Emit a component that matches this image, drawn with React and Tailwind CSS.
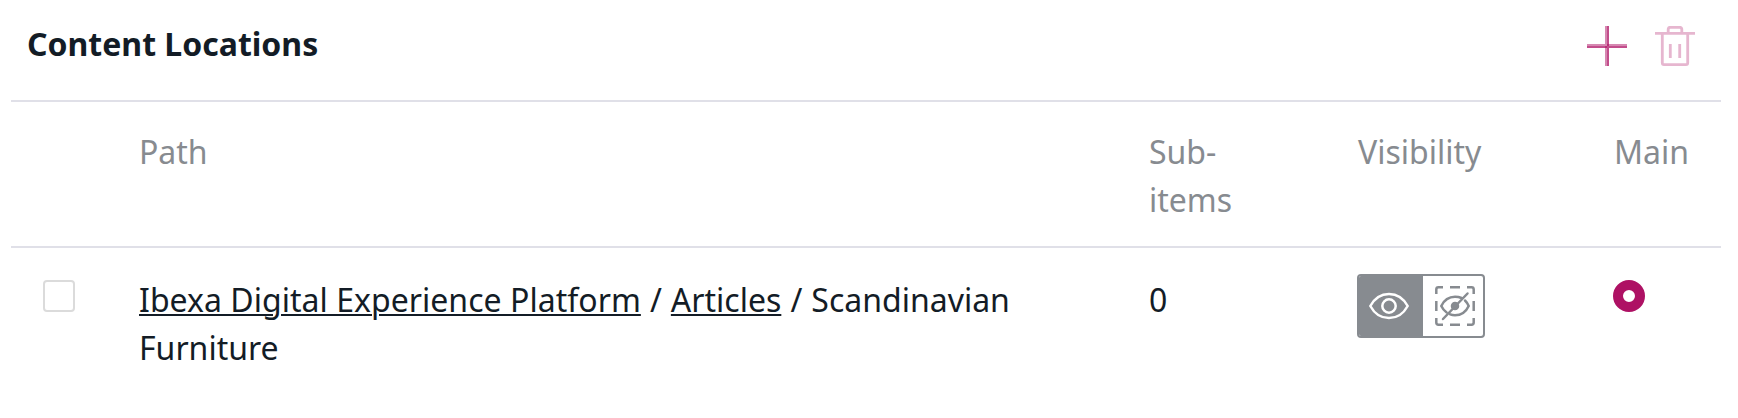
function PlusIcon() {
  return (
    <svg width="40" height="40" viewBox="0 0 40 40" fill="none" stroke="#ae1164" strokeWidth="2">
      <path d="M19 0V40M0 19H40" strokeOpacity="0.5" />
      <path d="M21 0V40M0 21H40" strokeOpacity="0.75" />
    </svg>
  );
}

function TrashIcon() {
  return (
    <svg width="40" height="40" viewBox="0 0 40 40" fill="none" stroke="#ae1164" strokeWidth="2.8" strokeLinejoin="round">
      <path d="M0 7.4H40M13.2 7V3.5Q13.2 1.3 15.4 1.3H24.6Q26.8 1.3 26.8 3.5V7M7.3 8V37Q7.3 38.6 9 38.6H31Q32.7 38.6 32.7 37V8M15.3 18V32M24.7 18V32" />
    </svg>
  );
}

function EyeIcon() {
  return (
    <svg width="40" height="40" viewBox="0 0 40 40" fill="none" stroke="#ffffff" strokeWidth="2.5">
      <path d="M1.3 20C5.5 12.3 12 7.9 20 7.9S34.5 12.3 38.7 20C34.5 27.7 28 32.1 20 32.1S5.5 27.7 1.3 20Z" strokeLinejoin="round" />
      <circle cx="20" cy="20" r="6.7" />
    </svg>
  );
}

function HiddenIcon() {
  return (
    <svg width="40" height="40" viewBox="0 0 40 40" fill="none" stroke="#878b90" strokeWidth="2.5">
      <path d="M1.3 8V3.5Q1.3 1.3 3.5 1.3H8M15 1.3H25M32 1.3H36.5Q38.7 1.3 38.7 3.5V8M38.7 15V25M38.7 32V36.5Q38.7 38.7 36.5 38.7H32M25 38.7H15M8 38.7H3.5Q1.3 38.7 1.3 36.5V32M1.3 25V15" />
      <path strokeLinecap="round" d="M26.5 12C24.5 11.1 22.3 10.7 20 10.7C14 10.7 9 14.2 6.3 20C7.6 22.7 9.3 24.8 11.4 26.3M30 14.5C31.6 16 32.8 17.9 33.7 20C31 25.8 26 29.3 20 29.3C18.3 29.3 16.7 29 15.2 28.4M8 33L32.5 7.5" />
      <circle cx="20" cy="20" r="3" fill="#878b90" />
    </svg>
  );
}

export default function App() {
  return (
    <main className="h-[418px] w-[1738px] overflow-hidden bg-white pl-[11px] pr-[17px] font-['Noto_Sans',sans-serif] text-[32px] leading-[48px] text-[#131c26]">
      <header className="flex h-[100px] items-start justify-between pl-4 pr-[26px] pt-5">
        <h2 className="font-bold">Content Locations</h2>
        <div className="flex gap-7 pt-1.5">
          <button type="button" aria-label="Add location"><PlusIcon /></button>
          <button type="button" aria-label="Delete location" disabled className="opacity-30"><TrashIcon /></button>
        </div>
      </header>
      <section>
        <div className="grid h-[146px] grid-cols-[128px_1010px_209px_256px_107px] items-start border-t-2 border-[#e0e0e8] pt-[26px] text-[#878b90]">
          <span />
          <span>Path</span>
          <span className="w-[110px]">Sub-<br />items</span>
          <span>Visibility</span>
          <span>Main</span>
        </div>
        <div className="grid grid-cols-[128px_1010px_208px_256px_108px] items-start border-t-2 border-[#e0e0e8] pt-[26px]">
          <span role="checkbox" aria-checked="false" className="ml-8 mt-1.5 size-8 rounded border-2 border-[#dbdbdb]" />
          <div className="pt-0.5">
            <div className="flex">
              <a className="tracking-[0.03px] underline decoration-2 underline-offset-2">Ibexa Digital Experience Platform</a>
              <span className="w-[30px] text-center">/</span>
              <a className="underline decoration-2 underline-offset-2">Articles</a>
              <span className="w-[30px] text-center">/</span>
              <span>Scandinavian</span>
            </div>
            <div>Furniture</div>
          </div>
          <span className="pt-0.5">0</span>
          <div className="flex h-16 w-32 overflow-hidden rounded border-2 border-[#878b90]">
            <span className="flex w-16 items-center bg-[#878b90] pl-2.5"><EyeIcon /></span>
            <span className="flex flex-1 items-center pl-3"><HiddenIcon /></span>
          </div>
          <span role="radio" aria-checked="true" className="mt-1.5 size-8 rounded-full border-10 border-[#ae1164] bg-white" />
        </div>
      </section>
    </main>
  );
}
